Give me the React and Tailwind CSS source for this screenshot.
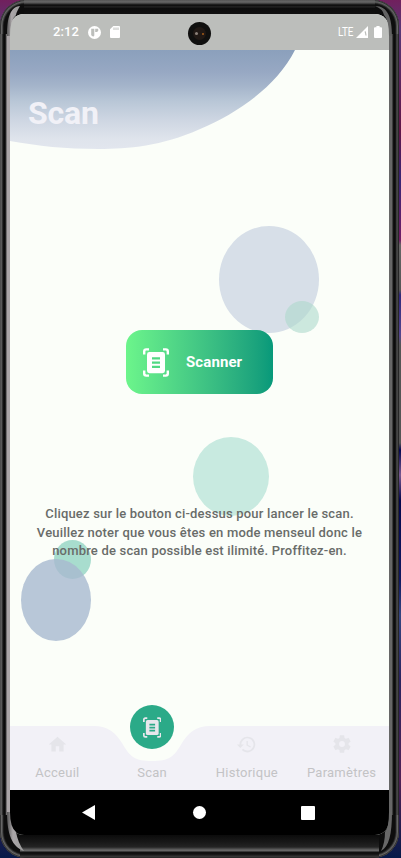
import React from "react";

function ScanIcon({ className, lines }) {
  return (
    <svg viewBox="0 0 26 29" className={className} fill="none">
      <path
        d="M1.2 6.6V3.4Q1.2 1.4 3.2 1.4H6M20 1.4H22.8Q24.8 1.4 24.8 3.4V6.6M1.2 22.4V25.6Q1.2 27.6 3.2 27.6H6M20 27.6H22.8Q24.8 27.6 24.8 25.6V22.4"
        stroke="currentColor"
        strokeWidth="2.4"
      />
      <rect x="4" y="4" width="18" height="21.2" rx="2.4" fill="currentColor" />
      <path d="M9 10.4H17M9 14.6H17M9 18.8H17" stroke={lines} strokeWidth="2.3" />
    </svg>
  );
}

function HomeIcon() {
  return (
    <svg viewBox="0 0 24 24" className="size-[21px]" fill="currentColor">
      <path d="M10 20v-6h4v6h5v-8h3L12 3 2 12h3v8z" />
    </svg>
  );
}

function HistoryIcon() {
  return (
    <svg viewBox="0 0 24 24" className="size-[21px]" fill="currentColor">
      <path d="M13 3a9 9 0 0 0-9 9H1l3.89 3.89.07.14L9 12H6a7 7 0 1 1 2.06 4.94l-1.42 1.42A9 9 0 1 0 13 3zm-1 5v5l4.28 2.54.72-1.21-3.5-2.08V8z" />
    </svg>
  );
}

function SettingsIcon() {
  return (
    <svg viewBox="0 0 24 24" className="size-[22px]" fill="currentColor">
      <path d="M19.14 12.94c.04-.3.06-.61.06-.94 0-.32-.02-.64-.07-.94l2.03-1.58a.49.49 0 0 0 .12-.61l-1.92-3.32a.488.488 0 0 0-.59-.22l-2.39.96c-.5-.38-1.03-.7-1.62-.94l-.36-2.54a.484.484 0 0 0-.48-.41h-3.84c-.24 0-.43.17-.47.41l-.36 2.54c-.59.24-1.13.57-1.62.94l-2.39-.96c-.22-.08-.47 0-.59.22L2.74 8.87c-.12.21-.08.47.12.61l2.03 1.58c-.05.3-.09.63-.09.94s.02.64.07.94l-2.03 1.58a.49.49 0 0 0-.12.61l1.92 3.32c.12.22.37.29.59.22l2.39-.96c.5.38 1.03.7 1.62.94l.36 2.54c.05.24.24.41.48.41h3.84c.24 0 .44-.17.47-.41l.36-2.54c.59-.24 1.13-.56 1.62-.94l2.39.96c.22.08.47 0 .59-.22l1.92-3.32c.12-.22.07-.47-.12-.61l-2.01-1.58zM12 15.2A3.2 3.2 0 1 1 12 8.8a3.2 3.2 0 0 1 0 6.4z" />
    </svg>
  );
}

function StatusBar() {
  return (
    <header className="relative flex h-9 shrink-0 items-center justify-between bg-[#bcbebb] pr-[7px] pl-[43px] text-white">
      <div className="flex items-center">
        <span className="w-[35px] text-[13px] leading-4 font-medium tracking-[0.1px]">2:12</span>
        <svg viewBox="0 0 13 13" className="size-[13px]">
          <circle cx="6.5" cy="6.5" r="6.5" fill="white" />
          <path d="M3.2 2.8H6.3V9.2Q6.3 10.4 5 10.4Q3.2 10.4 3.2 8.6Z" fill="#bcbebb" />
          <path d="M7.2 2.8H10.2V4.2Q10.2 6 8.6 6H7.2Z" fill="#bcbebb" />
        </svg>
        <svg viewBox="0 0 10 12" className="ml-[9px] h-3 w-2.5">
          <path d="M3.3 0H9Q10 0 10 1V11Q10 12 9 12H1Q0 12 0 11V3.3Z" fill="white" />
          <path d="M4 1.5V4M6 1.5V4M8 1.5V4" stroke="#bcbebb" strokeWidth="1" />
        </svg>
      </div>
      <div className="flex items-center">
        <span className="w-[18px] origin-left scale-x-[0.82] text-[12px] leading-4">LTE</span>
        <svg viewBox="0 0 12 12" className="size-3">
          <path d="M12 0V12H0Z" fill="white" />
          <path d="M9.2 5.4L10 9.5" stroke="#bcbebb" strokeWidth="1.2" />
        </svg>
        <svg viewBox="0 0 8 12" className="ml-[6px] h-3 w-2" fill="white">
          <path d="M2.4 0H5.6V1.3H7Q8 1.3 8 2.3V11Q8 12 7 12H1Q0 12 0 11V2.3Q0 1.3 1 1.3H2.4Z" />
        </svg>
      </div>
      <div className="absolute top-2 left-[178px] flex size-[23px] items-center justify-center rounded-full bg-[#10100f]">
        <div className="flex size-[13px] items-center justify-between rounded-full bg-[#211915] px-[2px]">
          <i className="size-[3px] rounded-full bg-[#8b8079]" />
          <i className="size-[2px] rounded-full bg-[#a45d19]" />
        </div>
      </div>
    </header>
  );
}

function Decorations() {
  return (
    <div className="absolute inset-0" aria-hidden="true">
      <svg viewBox="0 0 379 100" className="h-[100px] w-[379px]">
        <defs>
          <linearGradient id="header" x1="0" y1="0" x2="0" y2="1">
            <stop offset="0" stopColor="#8ba0bc" />
            <stop offset="0.22" stopColor="#97a8c3" />
            <stop offset="0.36" stopColor="#a4b4ca" />
            <stop offset="0.52" stopColor="#b9c7d7" />
            <stop offset="0.72" stopColor="#cfd7e3" />
            <stop offset="0.9" stopColor="#dfe4ec" />
            <stop offset="1" stopColor="#e2e6ee" />
          </linearGradient>
        </defs>
        <path d="M0 0H285C267 36 228 63 189 79.500C152 96 118 99 89 99C55 99 28 96 0 91Z" fill="url(#header)" />
      </svg>
      <i className="absolute top-[176px] left-[209px] h-[107px] w-[100px] rounded-[50%] bg-[#d7dfe8]" />
      <i className="absolute top-[251px] left-[275px] h-8 w-[34px] rounded-[50%] bg-[#aed8cb]/60" />
      <i className="absolute top-[387px] left-[183px] h-[79px] w-[76px] rounded-[50%] bg-[#c8eae0]" />
      <i className="absolute top-[490px] left-[44px] h-[39px] w-[37px] rounded-[50%] bg-[#a8ddce]" />
      <i className="absolute top-[509px] left-[11px] h-[82px] w-[70px] rounded-[50%] bg-[#a8b9cf]/80" />
    </div>
  );
}

function Tab({ label, children }) {
  return (
    <button className="flex flex-1 flex-col items-center text-[#e5e5ea]">
      <span className="flex h-[22px] items-center">{children}</span>
      <span className="mt-[10px] text-[13px] leading-4 tracking-[0.25px] text-[#c3c3c5]">{label}</span>
    </button>
  );
}

function BottomTabs() {
  return (
    <nav className="relative h-16 shrink-0">
      <svg viewBox="0 0 379 64" className="absolute inset-0 h-16 w-[379px]">
        <path d="M0 0H84C98 0 106 7 112 17C120 31 125 35 142 35C159 35 164 31 172 17C178 7 186 0 200 0H379V64H0Z" fill="#f2f1f7" />
      </svg>
      <div className="relative flex h-full pt-[7px]">
        <Tab label="Acceuil"><HomeIcon /></Tab>
        <Tab label="Scan">
          <span className="relative -top-[17px] flex size-11 shrink-0 items-center justify-center rounded-full bg-[#2baa88] text-[#e7e7ec]">
            <ScanIcon className="h-[21px] w-[18.5px]" lines="#2baa88" />
          </span>
        </Tab>
        <Tab label="Historique"><HistoryIcon /></Tab>
        <Tab label="Paramètres"><SettingsIcon /></Tab>
      </div>
    </nav>
  );
}

function SystemNav() {
  return (
    <footer className="flex h-[45px] shrink-0 items-center justify-between bg-black pr-[74px] pl-[72px]">
      <svg viewBox="0 0 13 15" className="h-[15px] w-[13px]"><path d="M13 0V15L0 7.500Z" fill="white" /></svg>
      <i className="ml-[2px] size-[13px] rounded-full bg-white" />
      <i className="size-[14px] rounded-[1px] bg-white" />
    </footer>
  );
}

function BezelHighlights() {
  return (
    <svg viewBox="0 0 399 858" className="absolute inset-0 h-[858px] w-[399px]" aria-hidden="true">
      <defs>
        <linearGradient id="glint" x1="0" y1="0" x2="1" y2="0">
          <stop offset="0" stopColor="#555" />
          <stop offset="0.35" stopColor="#aaa6a8" />
          <stop offset="1" stopColor="#999" />
        </linearGradient>
      </defs>
      <path d="M7 36C7 18 10 7 20 6Q16 13 16 15Q10 20 10 36Z" fill="url(#glint)" />
      <path d="M375 6C388 6 392 18 392 36H389Q389 20 384 15Q383 9 375 6Z" fill="#626262" />
      <path d="M7 812H10Q10 827 16 832Q18 843 24 851C12 847 7 834 7 812Z" fill="url(#glint)" />
      <path d="M392 812H389Q389 827 385 832Q385 843 381 851C389 847 392 834 392 812Z" fill="#686868" />
    </svg>
  );
}

export default function App() {
  return (
    <div className="h-[858px] w-[401px] overflow-hidden bg-[linear-gradient(to_bottom,#71205d_0,#573777_30px,#611447_130px,#372475_180px,#721c65_240px,#666_245px,#555_290px,#30277b_295px,#54458f_335px,#555_345px,#555_443px,#030650_450px,#785890_475px,#04064c_500px,#101860_580px,#354580_615px,#29225e_680px,#502055_780px,#061a49_858px)] font-['Roboto',sans-serif]">
      <div className="relative h-full w-[399px] overflow-hidden rounded-[26px] bg-[#0d0d0d] shadow-[inset_0_0_0_1px_#343434,inset_0_0_0_2px_#666,inset_0_0_0_3px_#484848,inset_0_0_0_4px_#1b1b1b]">
        <div className="flex h-full flex-col">
          <div className="mx-6 h-[14px] shrink-0 bg-[linear-gradient(to_bottom,#555_0,#686868_2px,#333_4px,#090909_5px,#262626_7px,#0c0c0c_8px,#101010_14px)]" />
          <div className="flex h-[821px] shrink-0">
            <div className="mt-5 mb-5 w-[10px] shrink-0 bg-[linear-gradient(to_right,#343434_0,#6a6a6a_1px,#484848_2px,#151515_3px,#060606_5px,#383838_6px,#aaa5a7_7px,#aaa5a7_10px)]" />
            <main className="flex w-[379px] shrink-0 flex-col overflow-hidden rounded-[14px] bg-[#fbfef9]">
              <StatusBar />
              <section className="relative flex min-h-0 flex-1 flex-col">
                <Decorations />
                <h1 className="relative mt-[43px] ml-[18px] text-[32px] leading-10 font-bold tracking-[-0.2px] text-[#f1f1f7]">Scan</h1>
                <button className="relative mt-[197px] ml-[116px] flex h-16 w-[147px] items-center rounded-[16px] bg-linear-to-r from-[#6cf58b] to-[#06997a] pl-[17px] text-white">
                  <ScanIcon className="h-[29px] w-[26px]" lines="#51d983" />
                  <span className="ml-[17px] text-[15px] font-bold tracking-[0.1px]">Scanner</span>
                </button>
                <p className="relative mt-[111px] text-center text-[13px] leading-[18.7px] font-medium tracking-[0.19px] text-[#696c69]">
                  Cliquez sur le bouton ci-dessus pour lancer le scan.<br />
                  Veuillez noter que vous êtes en mode menseul donc le<br />
                  nombre de scan possible est ilimité. Proffitez-en.
                </p>
              </section>
              <BottomTabs />
              <SystemNav />
            </main>
            <div className="mt-5 mb-5 w-[10px] shrink-0 bg-[linear-gradient(to_right,#676767_0,#676767_3px,#151515_4px,#080808_6px,#222_7px,#555_8px,#181818_10px)]" />
          </div>
          <div className="mx-5 flex-1 bg-[linear-gradient(to_bottom,#0b0b0b_0,#181818_7px,#242424_12px,#666_15px,#666_16px,#111_17px,#111_19px,#3d3d3d_22px,#181818_23px)]" />
        </div>
        <BezelHighlights />
      </div>
    </div>
  );
}
